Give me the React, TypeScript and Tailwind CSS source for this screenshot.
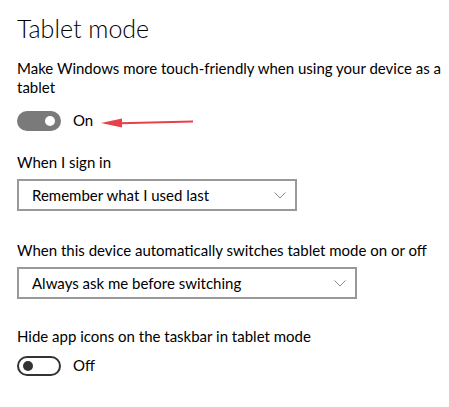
import React from "react";

const font = { fontFamily: 'Lato, "Noto Sans", sans-serif' };

function Toggle({ on, label }: { on: boolean; label: string }) {
  return (
    <div className="flex items-center h-[21px]">
      {on ? (
        <div className="w-[44px] h-[20px] rounded-full bg-[#7a7a7a] flex items-center justify-end pr-[6px]">
          <div className="w-[10px] h-[10px] rounded-full bg-white" />
        </div>
      ) : (
        <div className="w-[44px] h-[20px] rounded-full border-2 border-[#333] flex items-center pl-[4px]">
          <div className="w-[10px] h-[10px] rounded-full bg-[#333]" />
        </div>
      )}
      <span className="ml-[12px] text-[15px] text-black leading-none">{label}</span>
    </div>
  );
}

function Select({ value, width }: { value: string; width: string }) {
  return (
    <div
      className={`${width} h-[32px] border-2 border-[#999] flex items-center justify-between pl-[13px] pr-[9px]`}
    >
      <span className="text-[15px] text-black leading-none">{value}</span>
      <svg width="12" height="7" viewBox="0 0 12 7" fill="none">
        <path d="M0.5 0.5 L6 6 L11.5 0.5" stroke="#888" strokeWidth="1" />
      </svg>
    </div>
  );
}

export default function App() {
  return (
    <div className="w-[449px] h-[407px] bg-white pl-[17px] pt-[12px] relative" style={font}>
      <h1 className="text-[25px] font-light text-black leading-[32px]">Tablet mode</h1>

      <p className="mt-[15px] pr-[4px] text-[15px] leading-[19px] text-black">
        Make Windows more touch-friendly when using your device as a tablet
      </p>
      <div className="mt-[13px]">
        <Toggle on label="On" />
      </div>

      <p className="mt-[22px] text-[15px] leading-[19px] text-black">When I sign in</p>
      <div className="mt-[7px]">
        <Select value="Remember what I used last" width="w-[280px]" />
      </div>

      <p className="mt-[30px] text-[15px] leading-[19px] text-black">
        When this device automatically switches tablet mode on or off
      </p>
      <div className="mt-[7px]">
        <Select value="Always ask me before switching" width="w-[340px]" />
      </div>

      <p className="mt-[28px] text-[15px] leading-[19px] text-black">
        Hide app icons on the taskbar in tablet mode
      </p>
      <div className="mt-[9px]">
        <Toggle on={false} label="Off" />
      </div>

      {/* red annotation arrow */}
      <svg className="absolute left-[100px] top-[116px]" width="96" height="14" viewBox="0 0 96 14">
        <path d="M20 7.2 L93 5.5" stroke="#e8414a" strokeWidth="2" fill="none" />
        <path d="M1 7 L22 2.5 L22 11.5 Z" fill="#e8414a" />
      </svg>
    </div>
  );
}
